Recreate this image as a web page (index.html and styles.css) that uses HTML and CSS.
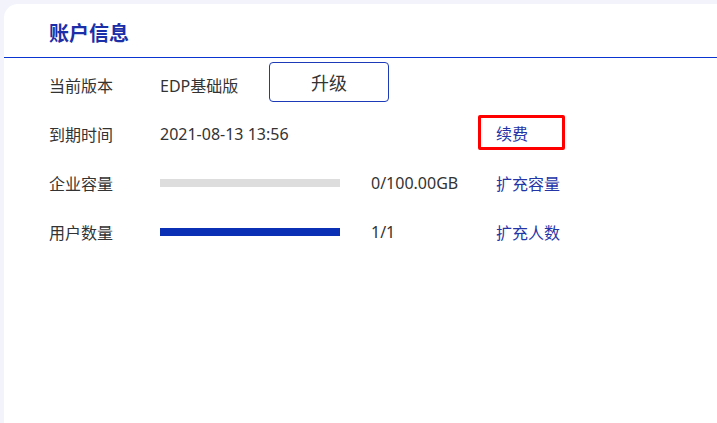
FILE: index.html
```html
<!DOCTYPE html>
<html lang="zh-CN">
<head>
    <meta charset="UTF-8">
    <meta name="viewport" content="width=device-width, initial-scale=1.0">
    <title>账户信息</title>
    <link rel="stylesheet" href="styles.css">
</head>
<body>
    <div class="card">
        <div class="card-header">
            <h2>账户信息</h2>
        </div>

        <div class="info-list">
            <!-- 版本 -->
            <div class="info-row">
                <span class="label">当前版本</span>
                <span class="value">
                    <span class="version">EDP基础版</span>
                    <button class="btn-upgrade">升级</button>
                </span>
            </div>

            <!-- 到期时间 -->
            <div class="info-row">
                <span class="label">到期时间</span>
                <span class="value">2021-08-13 13:56</span>
                <span class="amount"></span>
                <span class="mark"><a href="#" class="link">续费</a></span>
            </div>

            <!-- 容量 -->
            <div class="info-row">
                <span class="label">企业容量</span>
                <span class="value">
                    <span class="bar"><span class="bar-fill" style="width: 0%"></span></span>
                </span>
                <span class="amount">0/100.00GB</span>
                <a href="#" class="link">扩充容量</a>
            </div>

            <!-- 用户 -->
            <div class="info-row">
                <span class="label">用户数量</span>
                <span class="value">
                    <span class="bar"><span class="bar-fill" style="width: 100%"></span></span>
                </span>
                <span class="amount">1/1</span>
                <a href="#" class="link">扩充人数</a>
            </div>
        </div>
    </div>
</body>
</html>
```

FILE: styles.css
```css
/* Page */
body {
    margin: 0;
    padding: 4px 0 0 4px;
    background-color: #f2f3fb;
    font-family: "Noto Sans", "Noto Sans CJK SC", sans-serif;
    font-size: 16px;
    color: #333;
    height: 100vh;
    box-sizing: border-box;
    overflow: hidden;
}

.card {
    background-color: #fff;
    border-radius: 14px 0 0 0;
    margin-right: -20px;
    height: 100%;
}

.card-header {
    height: 53px;
    border-bottom: 1px solid #0a35d0;
    padding-left: 45px;
    display: flex;
    align-items: center;
}

.card-header h2 {
    margin: 3px 0 0 0;
    font-size: 20px;
    font-weight: bold;
    color: #1b2fa8;
}

.info-list {
    padding: 2px 0 0 45px;
}

.info-row {
    height: 49px;
    display: flex;
    align-items: center;
}

.label {
    width: 111px;
    flex-shrink: 0;
}

.value {
    width: 180px;
    flex-shrink: 0;
    display: flex;
    align-items: center;
    white-space: nowrap;
}

.version {
    width: 109px;
    flex-shrink: 0;
}

.btn-upgrade {
    width: 120px;
    height: 40px;
    flex-shrink: 0;
    margin-bottom: 6px;
    border: 1px solid #1d3bb8;
    border-radius: 4px;
    background-color: #fff;
    font-family: inherit;
    font-size: 18px;
    color: #333;
    cursor: pointer;
}

.amount {
    width: 125px;
    margin-left: 31px;
    flex-shrink: 0;
}

.link {
    color: #2435a8;
    text-decoration: none;
}

/* red annotation box round the renew link */
.mark {
    margin-left: -18px;
    height: 35px;
    box-sizing: border-box;
    padding: 0 34px 0 15px;
    border: 3px solid #ff0000;
    border-radius: 2px;
    display: flex;
    align-items: center;
    position: relative;
    top: -1px;
}

.bar {
    display: block;
    width: 180px;
    height: 8px;
    background-color: #dddddd;
}

.bar-fill {
    display: block;
    height: 100%;
    background-color: #0c30b5;
}
```
